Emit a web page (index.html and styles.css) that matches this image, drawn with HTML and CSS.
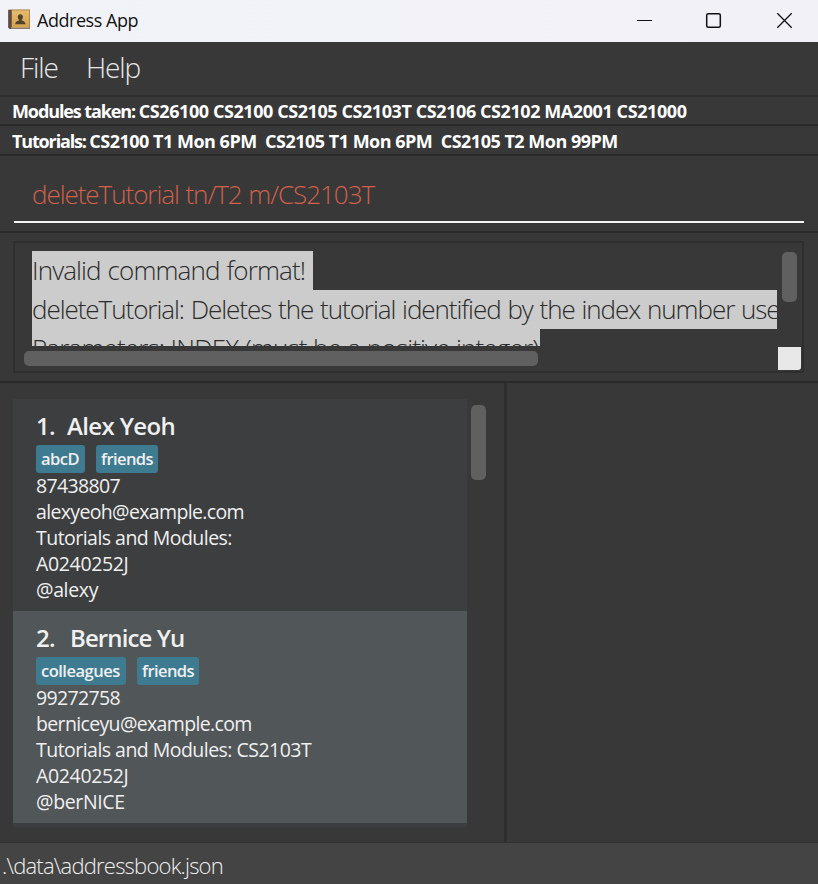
FILE: index.html
```html
<!DOCTYPE html>
<html lang="en">
<head>
<meta charset="utf-8">
<title>Address App</title>
<link rel="stylesheet" href="styles.css">
</head>
<body>
<div class="window">
  <header class="titlebar">
    <svg class="app-icon" width="22" height="22" viewBox="0 0 22 22">
      <defs><linearGradient id="cover" x1="0" y1="0" x2="0" y2="1"><stop offset="0" stop-color="#e6bb70"/><stop offset="1" stop-color="#d6a24c"/></linearGradient></defs>
      <path d="M1 .5h21v19.500H2.500L.3 19V1z" fill="#9a7440"/>
      <path d="M.3 1h3.200v17.500H21.500V20H2L.3 18.600z" fill="#5a4b45"/>
      <path d="M4 1.300h17.300v17H4z" fill="url(#cover)"/>
      <path d="M3 18.500h18.500v.9H3z" fill="#d9cba9"/>
      <path d="M12.400 5.200c1.700 0 2.500 1.200 2.500 2.700 0 1.300-.5 2.100-1.100 2.700v1c.7.500 3.400.8 3.600 2.900v.8H7.300v-.8c.2-2.100 2.900-2.400 3.600-2.900v-1c-.6-.6-1.100-1.400-1.100-2.700 0-1.500.9-2.700 2.600-2.700z" fill="#51432f"/>
    </svg>
    <span class="title">Address App</span>
    <svg class="controls" width="158" height="18" viewBox="0 0 158 18" fill="none" stroke="#111" stroke-width="1.300">
      <path d="M0 9.500h15" stroke-width="1"/>
      <rect x="69.700" y="2.700" width="13.600" height="13.600" rx="1.500" stroke-width="1.500"/>
      <path d="M140.300 2.300l14.400 14.400M154.700 2.300l-14.400 14.400"/>
    </svg>
  </header>
  <nav class="menubar"><span class="menu-file">File</span><span>Help</span></nav>
  <div class="info modules"><span class="label">Modules taken: </span>CS26100 CS2100 CS2105 CS2103T CS2106 CS2102 MA2001 CS21000</div>
  <div class="info tutorials"><span class="label">Tutorials: </span>CS2100 T1 Mon 6PM&nbsp; CS2105 T1 Mon 6PM&nbsp; CS2105 T2 Mon 99PM</div>
  <section class="command"><div class="command-field">deleteTutorial tn/T2 m/CS2103T</div></section>
  <section class="result">
    <div class="result-box">
      <div class="result-main">
        <div class="result-text">
          <div class="line line-first">Invalid command format!</div>
          <div class="line line-wide">deleteTutorial: Deletes the tutorial identified by the index number used</div>
          <div class="line line-params">Parameters: INDEX (must be a positive integer)</div>
        </div>
        <div class="thumb-h"></div>
      </div>
      <div class="result-side"><div class="thumb-v"></div><div class="corner"></div></div>
    </div>
  </section>
  <main class="content">
    <section class="people">
      <div class="list">
        <article class="card">
          <h2 class="n1"><span class="num">1.</span><span>Alex Yeoh</span></h2>
          <div class="tags"><span class="tag t-abcd">abcD</span><span class="tag t-friends">friends</span></div>
          <p>87438807</p>
          <p>alexyeoh@example.com</p>
          <p class="loose">Tutorials and Modules:</p>
          <p class="id">A0240252J</p>
          <p class="handle">@alexy</p>
        </article>
        <article class="card selected">
          <h2 class="n2"><span class="num">2.</span><span>Bernice Yu</span></h2>
          <div class="tags"><span class="tag t-col">colleagues</span><span class="tag t-friends">friends</span></div>
          <p>99272758</p>
          <p>berniceyu@example.com</p>
          <p class="loose">Tutorials and Modules: CS2103T</p>
          <p class="id">A0240252J</p>
          <p class="handle">@berNICE</p>
        </article>
      </div>
      <div class="list-thumb"></div>
    </section>
    <section class="details"></section>
  </main>
  <footer class="status">.\data\addressbook.json</footer>
</div>
</body>
</html>
```
FILE: styles.css
```css
* { box-sizing: border-box; }
body { margin: 0; background: #383838; font-family: "Open Sans", "Noto Sans", sans-serif; }
.window { width: 818px; height: 884px; display: flex; flex-direction: column; overflow: hidden; background: #383838; }
.window > * { flex: none; }

.titlebar { height: 42px; display: flex; align-items: center; padding: 0 23px 3px 8px; background: linear-gradient(90deg, #f1f3f9, #f3f1f8); }
.title { margin-left: 7px; font-size: 18px; letter-spacing: -.46px; color: #111; line-height: 24px; }
.controls { margin-left: auto; }

.menubar { height: 53px; display: flex; padding: 7px 20px 0; font-size: 28px; font-weight: 300; line-height: 36px; letter-spacing: -1.1px; color: #e8e8e8; }
.menu-file { width: 66px; }

.info { padding-left: 12px; font-size: 18px; font-weight: 700; color: #fff; white-space: pre; }
.modules { height: 30px; border-top: 2px solid #2e2e2e; border-bottom: 1px solid #2a2a2a; line-height: 29px; letter-spacing: -.42px; }
.tutorials { height: 31px; border-top: 1px solid #2a2a2a; border-bottom: 2px solid #2a2a2a; line-height: 30px; letter-spacing: -.5px; }
.modules .label { letter-spacing: -1.1px; }
.tutorials .label { letter-spacing: -1.15px; }

.command { height: 77px; padding: 11px 14px 0; border-bottom: 2px solid #2a2a2a; }
.command-field { height: 56px; padding-left: 18px; border-bottom: 2px solid #f4f4f4; font-size: 26px; font-weight: 300; line-height: 54px; letter-spacing: -1.05px; word-spacing: 1px; color: #d2604b; }

.result { height: 150px; padding: 8px 13px 9px; border-bottom: 2px solid #2a2a2a; }
.result-box { height: 132px; width: 791px; display: flex; border: 2px solid #2e2e2e; padding: 8px 1px 1px 9px; }
.result-main { width: 753px; display: flex; flex-direction: column; }
.result-text { height: 95px; margin-left: 8px; overflow: hidden; font-size: 26px; font-weight: 300; color: #2b2b2b; }
.line { height: 39px; line-height: 39px; background: #ccc; white-space: nowrap; overflow: hidden; }
.line-first { width: 281px; letter-spacing: -.88px; word-spacing: 1px; }
.line-wide { letter-spacing: -1.05px; word-spacing: 1.1px; }
.line-params { width: 508px; letter-spacing: -.85px; word-spacing: .5px; }
.thumb-h { width: 514px; height: 15px; margin-top: 5px; border-radius: 5px; background: #606060; }
.result-side { flex: 1; display: flex; flex-direction: column; justify-content: space-between; align-items: flex-end; }
.thumb-v { width: 15px; height: 50px; margin: 1px 4px 0 0; border-radius: 5px; background: #606060; }
.corner { width: 23px; height: 23px; background: #e8e8e8; border-bottom-right-radius: 3px; }

.content { height: 459px; display: flex; }
.people { width: 507px; display: flex; padding: 16px 0 0 13px; border-right: 3px solid #2e2e2e; }
.list { width: 454px; height: 428px; background: #3c3e3f; }
.card { height: 212px; padding: 11px 23px 0; color: #f0f0f0; }
.selected { background: #515658; }
.card h2 { margin: 0; display: flex; height: 31px; font-size: 24px; font-weight: 600; line-height: 31px; }
.num { letter-spacing: -.6px; }
.n1 { letter-spacing: -.64px; }
.n1 .num { width: 31px; }
.n2 { letter-spacing: -.9px; }
.n2 .num { width: 34px; }
.tags { height: 32px; display: flex; gap: 11px; padding-top: 4px; }
.tag { height: 28px; padding-left: 5px; border-radius: 3px; background: #3e7b91; font-size: 16.5px; font-weight: 600; line-height: 27px; letter-spacing: -.5px; }
.t-abcd { width: 49px; }
.t-friends { width: 62px; letter-spacing: -.57px; }
.t-col { width: 90px; }
.card p { margin: 0; height: 26px; line-height: 26px; font-size: 19.5px; letter-spacing: -.65px; white-space: nowrap; }
.card p.loose { letter-spacing: -.53px; }
.card p.id, .card p.handle { letter-spacing: -.35px; }
.list-thumb { width: 15px; height: 75px; margin: 6px 0 0 4px; border-radius: 5px; background: #606060; }
.details { flex: 1; }

.status { height: 42px; border-top: 1px solid #303030; background: #444; padding-left: 2px; font-size: 22px; font-weight: 300; line-height: 45px; letter-spacing: -.78px; color: #f0f0f0; }
```
